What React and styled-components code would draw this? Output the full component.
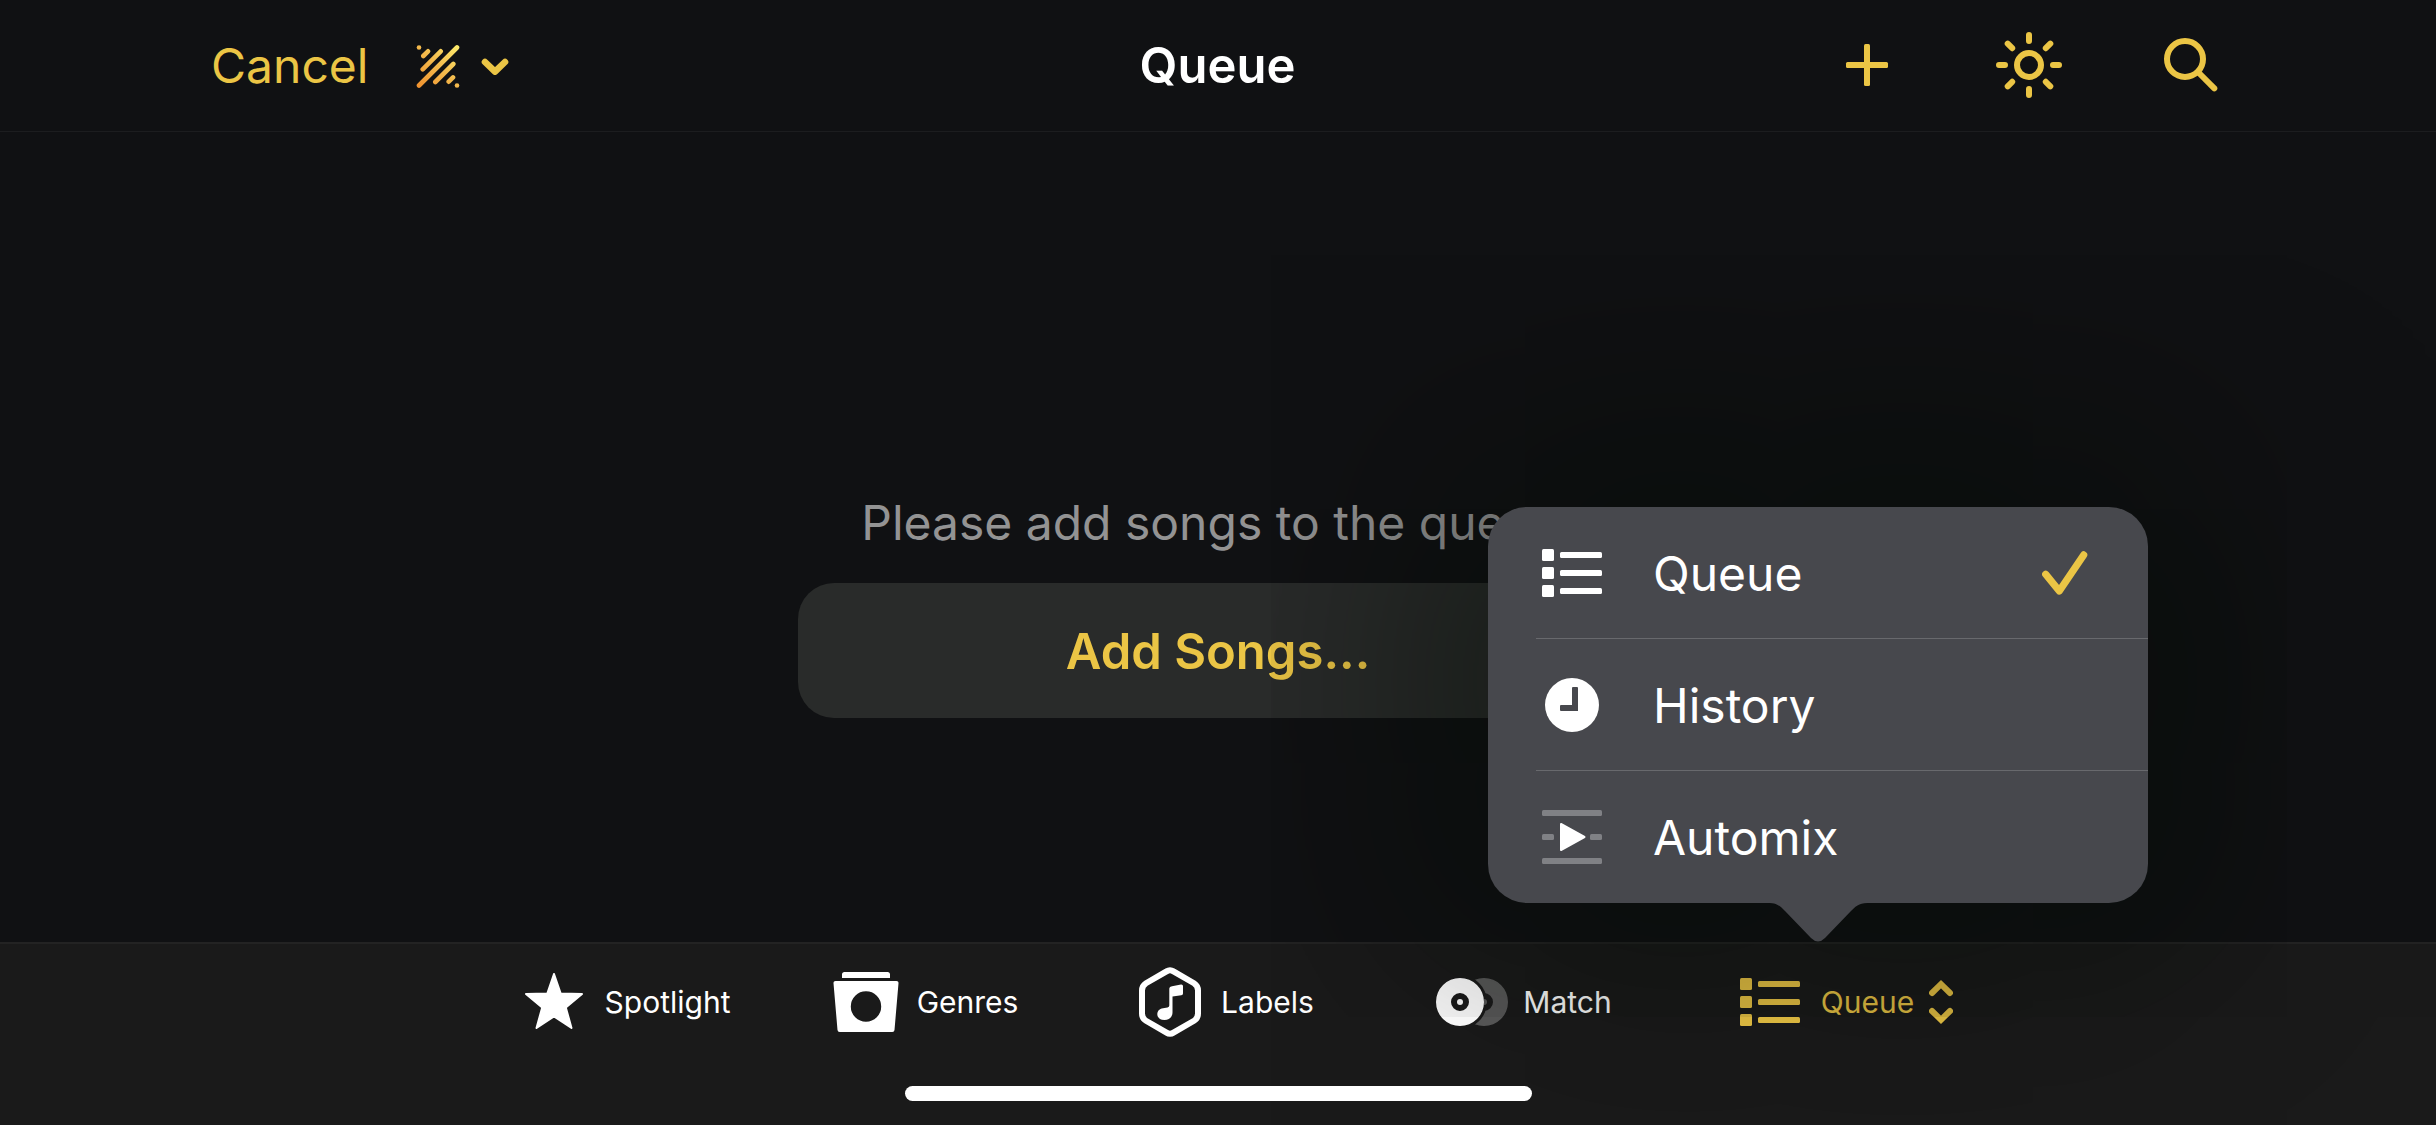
import React from "react";
import styled, { createGlobalStyle } from "styled-components";

const color = {
  page: "#101113",
  bar: "#1a1a1a",
  accent: "#ebc545",
  popover: "#47484d",
};

const GlobalStyle = createGlobalStyle`
  *, *::before, *::after { box-sizing: border-box; }
  body {
    margin: 0;
    background: ${color.page};
    color: #fff;
    font-family: Inter, "Liberation Sans", sans-serif;
    overflow-x: hidden;
  }
  svg { display: block; flex: none; }
`;

const Screen = styled.div`
  min-height: 100vh;
  display: flex;
  flex-direction: column;
  overflow: hidden;
`;

const PlainButton = styled.button`
  margin: 0;
  padding: 0;
  border: 0;
  background: none;
  color: inherit;
  font: inherit;
  display: flex;
  align-items: center;
  cursor: pointer;
`;

const Header = styled.header`
  display: grid;
  grid-template-columns: 1fr auto 1fr;
  align-items: center;
  height: 132px;
  padding: 0 212px 0 211px;
  border-bottom: 1px solid #1c1d1f;
  color: ${color.accent};
  font-size: 48px;
  line-height: 60px;
`;

const HeaderGroup = styled.div`
  display: flex;
  align-items: center;
  gap: 48px;
`;

const HeaderActions = styled(HeaderGroup)`
  justify-content: flex-end;
  gap: 96px;
  padding-bottom: 2px;
`;

const StyleButton = styled(PlainButton)`
  gap: 21px;
`;

const Title = styled.h1`
  margin: 0;
  padding-top: 1px;
  color: #fff;
  font-size: 49px;
  font-weight: 600;
`;

const Main = styled.main`
  flex: 1;
  display: flex;
  flex-direction: column;
  align-items: center;
  padding: 361px 48px 224px;
`;

const Message = styled.p`
  margin: 0;
  color: #939393;
  font-size: 48px;
  line-height: 60px;
`;

const AddButton = styled(PlainButton)`
  justify-content: center;
  width: 100%;
  max-width: 840px;
  height: 135px;
  margin-top: 30px;
  padding-top: 1px;
  border-radius: 36px;
  background: #292b2a;
  color: ${color.accent};
  font-size: 49px;
  font-weight: 600;
`;

const TabBar = styled.nav`
  display: flex;
  flex-direction: column;
  align-items: center;
  padding-bottom: 24px;
  border-top: 2px solid #232323;
  background: ${color.bar};
`;

const Tabs = styled.div`
  display: grid;
  grid-template-columns: repeat(5, 300px);
  justify-content: center;
`;

const TabSlot = styled.div`
  position: relative;
  display: grid;
`;

const TabButton = styled(PlainButton)`
  justify-content: center;
  gap: 6px;
  height: 116px;
  padding-left: 3px;
  color: ${(p) => (p.$active ? color.accent : "#fff")};
  font-size: 30px;
  line-height: 36px;
`;

const TabIcon = styled.span`
  display: flex;
  justify-content: center;
  width: 90px;
`;

const SwitchMark = styled.span`
  margin: 0 -39px 0 9px;
`;

const HomeIndicator = styled.div`
  position: relative;
  z-index: 2;
  width: 627px;
  height: 15px;
  margin-top: 26px;
  border-radius: 8px;
  background: #fff;
`;

const Popover = styled.div`
  position: absolute;
  z-index: 1;
  bottom: calc(100% + 41px);
  left: 50%;
  width: 660px;
  margin-left: -330px;
  padding-left: 48px;
  border-radius: 39px;
  background: ${color.popover};
  box-shadow: 0 0 380px 48px rgba(4, 8, 0, 0.6);
`;

const PopoverArrow = styled.svg`
  position: absolute;
  top: 100%;
  left: 50%;
  margin-left: -53px;
`;

const MenuItem = styled(PlainButton)`
  width: 100%;
  height: 132px;
  padding-right: 60px;
  gap: 45px;
  border-bottom: 1px solid #68696d;
  font-size: 48px;
  line-height: 60px;
  &:nth-of-type(3) { border-bottom-color: transparent; }
`;

const MenuIcon = styled.span`
  display: flex;
  justify-content: center;
  width: 72px;
`;

const MenuLabel = styled.span`
  flex: 1;
  padding-top: 2px;
  text-align: left;
`;

const ListIcon = () => (
  <svg width="60" height="48" viewBox="0 0 60 48" fill="currentColor" aria-hidden="true">
    {[0, 18, 36].map((y) => (
      <g key={y}>
        <rect x="0" y={y} width="12" height="12" rx="1.5" />
        <rect x="18" y={y + 3} width="42" height="6" rx="1.5" />
      </g>
    ))}
  </svg>
);

const HistoryIcon = () => (
  <svg width="54" height="54" viewBox="0 0 54 54" aria-hidden="true">
    <circle cx="27" cy="27" r="27" fill="#fff" />
    <path d="M28 9h4a1 1 0 0 1 1 1v23H16a1 1 0 0 1-1-1v-4a1 1 0 0 1 1-1h11V10a1 1 0 0 1 1-1z" fill={color.popover} />
  </svg>
);

const AutomixIcon = () => (
  <svg width="60" height="54" viewBox="0 0 60 54" aria-hidden="true">
    <g fill="#808185">
      <rect width="60" height="6" rx="1.5" />
      <rect y="48" width="60" height="6" rx="1.5" />
      <rect y="24" width="12" height="6" rx="1.5" />
      <rect x="48" y="24" width="12" height="6" rx="1.5" />
    </g>
    <path d="M19 14v26L42.5 27z" fill="#fff" stroke="#fff" strokeWidth="2" strokeLinejoin="round" />
  </svg>
);

const CheckIcon = () => (
  <svg width="46" height="44" viewBox="0 0 46 44" fill="none" stroke={color.accent} strokeWidth="7.2" strokeLinecap="round" strokeLinejoin="round" aria-hidden="true">
    <path d="M3.7 23.3 17.3 40 41.7 3.9" />
  </svg>
);

const StripesIcon = () => (
  <svg width="44" height="44" viewBox="0 0 44 44" fill="none" stroke="url(#stripes)" strokeWidth="4.6" strokeLinecap="round" aria-hidden="true">
    <defs>
      <linearGradient id="stripes" gradientUnits="userSpaceOnUse" x1="2" y1="42" x2="42" y2="2">
        <stop offset="0" stopColor="#f0922f" />
        <stop offset="0.5" stopColor="#f3b94c" />
        <stop offset="1" stopColor="#fdec6c" />
      </linearGradient>
    </defs>
    <path d="M3 41.5 41 3.5M6.7 25.3l18-18M7.3 12l4.7-4.7M19.3 38l18-18M32.7 37.7l4.3-4.3" />
    <g fill="url(#stripes)" stroke="none">
      <circle cx="3" cy="3.5" r="2.3" />
      <circle cx="41" cy="41.5" r="2.3" />
    </g>
  </svg>
);

const ChevronIcon = () => (
  <svg width="28" height="18" viewBox="0 0 28 18" fill="none" stroke="currentColor" strokeWidth="6.6" strokeLinecap="round" strokeLinejoin="round" aria-hidden="true">
    <path d="M4 5 14 14.7 24 5" />
  </svg>
);

const PlusIcon = () => (
  <svg width="66" height="66" viewBox="0 0 66 66" fill="currentColor" aria-hidden="true">
    <rect x="30" y="12" width="6" height="42" rx="1.5" />
    <rect x="12" y="30" width="42" height="6" rx="1.5" />
  </svg>
);

const SunIcon = () => (
  <svg width="66" height="66" viewBox="0 0 66 66" fill="none" stroke="currentColor" strokeWidth="6" strokeLinecap="round" aria-hidden="true">
    <circle cx="33" cy="33" r="12" />
    <path d="M33 3v6M33 57v6M3 33h6M57 33h6M11.7 11.7l4.5 4.5M49.8 49.8l4.5 4.5M11.7 54.3l4.5-4.5M49.8 16.2l4.5-4.5" />
  </svg>
);

const SearchIcon = () => (
  <svg width="66" height="66" viewBox="0 0 66 66" fill="none" stroke="currentColor" strokeWidth="6" strokeLinecap="round" aria-hidden="true">
    <circle cx="27" cy="27" r="18" />
    <path d="M40.5 40.5 56.3 56.3" />
  </svg>
);

const StarIcon = () => (
  <svg width="58" height="58" viewBox="0 0 58 58" fill="currentColor" stroke="currentColor" strokeWidth="2" strokeLinejoin="round" aria-hidden="true">
    <path d="M29 1 35.7 20.5 57 21 40.8 34.5 46.5 55 29 43.5 11.5 55 17.2 34.5 1 21 22.3 20.5z" />
  </svg>
);

const CrateIcon = () => (
  <svg width="66" height="60" viewBox="0 0 66 60" fill="currentColor" aria-hidden="true">
    <path d="M9 6V2.5A2.5 2.5 0 0 1 11.5 0h43A2.5 2.5 0 0 1 57 2.5V6z" />
    <path fillRule="evenodd" d="M2.5 9h61A2 2 0 0 1 65.5 11.2L61.5 58A2.2 2.2 0 0 1 59.3 60H6.7A2.2 2.2 0 0 1 4.5 58L.5 11.2A2 2 0 0 1 2.5 9zM33 19.3a15.2 15.2 0 1 0 0 30.4a15.2 15.2 0 1 0 0-30.4z" />
  </svg>
);

const LabelIcon = () => (
  <svg width="62" height="70" viewBox="0 0 62 70" aria-hidden="true">
    <path d="M27.5 4.4Q31 2.2 34.5 4.4L55 16.2Q59 18.7 59 23.5V46.5Q59 51.3 55 53.8L34.5 65.6Q31 67.8 27.5 65.6L7 53.8Q3 51.3 3 46.5V23.5Q3 18.7 7 16.2z" fill="none" stroke="currentColor" strokeWidth="6" />
    <path d="M33 19.2 42 17.5Q44 17.3 44 19V26.5Q44 28 42.3 28.3L33.5 29.5V45.5C33.5 50 30 53 25.5 53C21 53 18.3 50.5 18.3 47.3C18.3 43 21.5 41.3 25.5 40.9L28.5 40.5Q30.3 40.2 30.3 38.5V21.5Q30.3 19.5 33 19.2z" fill="currentColor" />
  </svg>
);

const DiscsIcon = () => (
  <svg width="72" height="48" viewBox="0 0 72 48" fill="currentColor" aria-hidden="true">
    <defs>
      <mask id="behind">
        <rect width="72" height="48" fill="#fff" />
        <circle cx="24" cy="24" r="27" fill="#000" />
      </mask>
      <mask id="behindHub">
        <rect width="72" height="48" fill="#fff" />
        <circle cx="24" cy="24" r="24" fill="#000" />
      </mask>
    </defs>
    <path fillRule="evenodd" d="M24 0a24 24 0 1 0 0 48a24 24 0 1 0 0-48zM24 15a9 9 0 1 1 0 18a9 9 0 1 1 0-18z" />
    <circle cx="24" cy="24" r="3" />
    <g opacity="0.27">
      <path mask="url(#behind)" fillRule="evenodd" d="M48 0a24 24 0 1 0 0 48a24 24 0 1 0 0-48zM48 15a9 9 0 1 1 0 18a9 9 0 1 1 0-18z" />
      <circle mask="url(#behindHub)" cx="48" cy="24" r="3" />
    </g>
  </svg>
);

const UpDownIcon = () => (
  <svg width="24" height="44" viewBox="0 0 24 44" fill="none" stroke="currentColor" strokeWidth="6" strokeLinecap="round" aria-hidden="true">
    <path d="M3 13 12 4.2 21 13M3 31 12 39.8 21 31" />
  </svg>
);

const tabs = [
  { label: "Spotlight", Icon: StarIcon },
  { label: "Genres", Icon: CrateIcon },
  { label: "Labels", Icon: LabelIcon },
  { label: "Match", Icon: DiscsIcon },
  { label: "Queue", Icon: ListIcon, active: true },
];

const views = [
  { label: "Queue", Icon: ListIcon, checked: true },
  { label: "History", Icon: HistoryIcon },
  { label: "Automix", Icon: AutomixIcon },
];

const ViewMenu = () => (
  <Popover role="menu">
    {views.map(({ label, Icon, checked }) => (
      <MenuItem key={label} type="button" role="menuitemradio" aria-checked={!!checked}>
        <MenuIcon><Icon /></MenuIcon>
        <MenuLabel>{label}</MenuLabel>
        {checked && <CheckIcon />}
      </MenuItem>
    ))}
    <PopoverArrow width="106" height="39" viewBox="0 0 106 39" aria-hidden="true">
      <path d="M0 0C11 0 13 1 20 8L46 35Q53 42 60 35L86 8C93 1 95 0 106 0z" fill={color.popover} />
    </PopoverArrow>
  </Popover>
);

export default function App() {
  return (
    <Screen>
      <GlobalStyle />
      <Header>
        <HeaderGroup>
          <PlainButton type="button">Cancel</PlainButton>
          <StyleButton type="button" aria-label="Source">
            <StripesIcon />
            <ChevronIcon />
          </StyleButton>
        </HeaderGroup>
        <Title>Queue</Title>
        <HeaderActions>
          <PlainButton type="button" aria-label="Add"><PlusIcon /></PlainButton>
          <PlainButton type="button" aria-label="Brightness"><SunIcon /></PlainButton>
          <PlainButton type="button" aria-label="Search"><SearchIcon /></PlainButton>
        </HeaderActions>
      </Header>
      <Main>
        <Message>Please add songs to the queue.</Message>
        <AddButton type="button">Add Songs...</AddButton>
      </Main>
      <TabBar>
        <Tabs>
          {tabs.map(({ label, Icon, active }) => (
            <TabSlot key={label}>
              <TabButton type="button" $active={active} aria-current={active ? "page" : undefined}>
                <TabIcon><Icon /></TabIcon>
                <span>{label}</span>
                {active && <SwitchMark><UpDownIcon /></SwitchMark>}
              </TabButton>
              {active && <ViewMenu />}
            </TabSlot>
          ))}
        </Tabs>
        <HomeIndicator />
      </TabBar>
    </Screen>
  );
}
